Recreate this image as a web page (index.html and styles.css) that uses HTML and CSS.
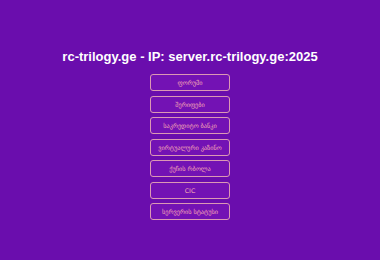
FILE: index.html
```html
<!DOCTYPE html>
<html lang="ka">
<head>
  <meta charset="UTF-8">
  <meta name="viewport" content="width=device-width, initial-scale=1.0">
  <title>rc-trilogy.ge</title>
  <link rel="stylesheet" href="styles.css">
</head>
<body>

  <div class="wrap">
    <h1>rc-trilogy.ge - IP: server.rc-trilogy.ge:2025</h1>

    <div class="menu">
      <a href="#">ფორუმი</a>
      <a href="#">შერიფები</a>
      <a href="#">საკრედიტო ბანკი</a>
      <a href="#">ვირტუალური კაზინო</a>
      <a href="#">ქუჩის რბოლა</a>
      <a href="#">CIC</a>
      <a href="#">სერვერის სტატუსი</a>
    </div>
  </div>

</body>
</html>
```
FILE: styles.css
```css
* {
  margin: 0;
  padding: 0;
  box-sizing: border-box;
}

html, body {
  height: 100%;
}

body {
  font-family: "Liberation Sans", Arial, "DejaVu Sans", sans-serif;
  background-color: #6a0dad;
  color: #fff;
}

.wrap {
  padding-top: 48px;
  text-align: center;
}

.wrap h1 {
  font-size: 13px;
  font-weight: bold;
  line-height: 18px;
  margin-bottom: 8px;
}

.menu {
  display: flex;
  flex-direction: column;
  align-items: center;
  gap: 4.5px;
}

.menu a {
  display: flex;
  align-items: center;
  justify-content: center;
  width: 80px;
  height: 17px;
  border: 1px solid #dc98b4;
  border-radius: 3px;
  background-color: #7312b4;
  color: #f4a8b4;
  font-family: "DejaVu Sans", sans-serif;
  font-size: 6.3px;
  text-decoration: none;
}
```
